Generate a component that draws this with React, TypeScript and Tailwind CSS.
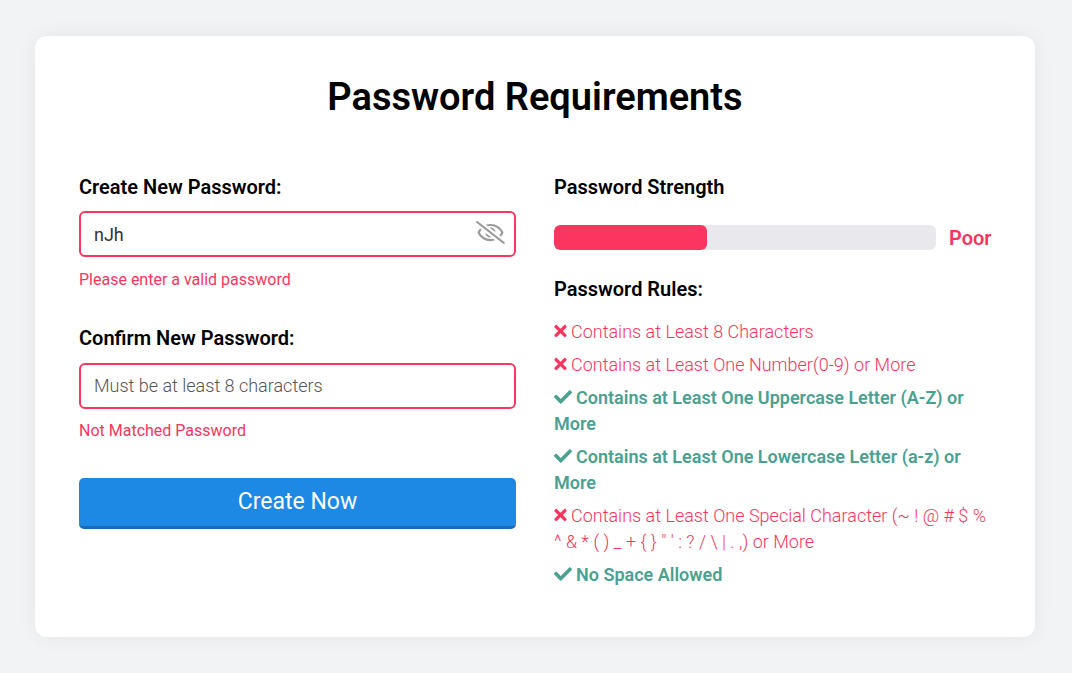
import { useState } from "react";
import { FaCheck, FaRegEyeSlash, FaTimes } from "react-icons/fa";

const rules = [
  { text: "Contains at Least 8 Characters", ok: false },
  { text: "Contains at Least One Number(0-9) or More", ok: false },
  { text: "Contains at Least One Uppercase Letter (A-Z) or More", ok: true },
  { text: "Contains at Least One Lowercase Letter (a-z) or More", ok: true },
  {
    text: "Contains at Least One Special Character (~ ! @ # $ % ^ & * ( ) _ + { } \" ' : ? / \\ | . ,) or More",
    ok: false,
  },
  { text: "No Space Allowed", ok: true },
];

function Rule({ text, ok }: { text: string; ok: boolean }) {
  const Icon = ok ? FaCheck : FaTimes;
  return (
    <li className={ok ? "font-semibold text-[#4aa191]" : "font-light text-[#f93560]"}>
      <Icon
        aria-hidden="true"
        className={ok ? "mr-1 inline h-[18px] w-[18px] align-[-2px]" : "mr-1 inline h-[18px] w-[13px] align-[-2px]"}
      />
      {text}
    </li>
  );
}

export default function App() {
  const [password, setPassword] = useState("nJh");
  const [confirm, setConfirm] = useState("");
  const [visible, setVisible] = useState(true);

  return (
    <div className="min-h-screen bg-[#f1f3f5] py-9 pr-[37px] pl-[35px] font-['Roboto',sans-serif] text-black">
      <main className="mx-auto max-w-[1000px] rounded-xl bg-white px-11 pt-9 pb-[49px] shadow-[0_0_20px_rgba(0,0,0,0.06)]">
        <h1 className="text-center text-[38px] leading-[50px] font-semibold">Password Requirements</h1>
        <div className="mt-[52px] grid grid-cols-1 gap-x-[38px] gap-y-8 md:grid-cols-2">
          <form onSubmit={(e) => e.preventDefault()}>
            <label htmlFor="password" className="block text-[20px] leading-[26px] font-semibold">
              Create New Password:
            </label>
            <div className="mt-[11px] flex h-[46px] items-center rounded-md border-2 border-[#f93560] pr-[9px] pl-[13px]">
              <input
                id="password"
                type={visible ? "text" : "password"}
                value={password}
                onChange={(e) => setPassword(e.target.value)}
                className="min-w-0 flex-1 bg-transparent text-[18px] text-[#333] outline-none"
              />
              <button
                type="button"
                aria-label="Toggle password visibility"
                onClick={() => setVisible(!visible)}
                className="pb-1 text-[#999]"
              >
                <FaRegEyeSlash className="h-[23px] w-[29px]" />
              </button>
            </div>
            <p className="mt-3 text-[16px] leading-[22px] text-[#f93560]">Please enter a valid password</p>
            <label htmlFor="confirm" className="mt-[34px] block text-[20px] leading-[26px] font-semibold">
              Confirm New Password:
            </label>
            <input
              id="confirm"
              type="password"
              value={confirm}
              onChange={(e) => setConfirm(e.target.value)}
              placeholder="Must be at least 8 characters"
              className="mt-3 block h-[46px] w-full rounded-md border-2 border-[#f93560] px-[13px] pb-[2px] text-[18px] font-light outline-none placeholder:text-[#555]"
            />
            <p className="mt-[11px] text-[16px] leading-[22px] text-[#f93560]">Not Matched Password</p>
            <button
              type="submit"
              className="mt-9 h-[51px] w-full rounded-[5px] border-b-3 border-[#1a6ab5] bg-[#1e88e5] text-[23px] text-white"
            >
              Create Now
            </button>
          </form>
          <section>
            <h2 className="text-[20px] leading-[26px] font-semibold">Password Strength</h2>
            <div className="mt-[25px] flex items-end">
              <div className="h-[25px] flex-1 overflow-hidden rounded-md bg-[#e9e8ed]">
                <div className="h-full w-2/5 rounded-md bg-[#f93560]" />
              </div>
              <span className="w-[55px] pl-[13px] text-[20px] leading-6 font-semibold text-[#f93560]">Poor</span>
            </div>
            <h2 className="mt-[26px] text-[20px] leading-[26px] font-semibold">Password Rules:</h2>
            <ul className="mt-[17px] flex flex-col gap-[7px] text-[18px] leading-[26px]">
              {rules.map((rule) => (
                <Rule key={rule.text} text={rule.text} ok={rule.ok} />
              ))}
            </ul>
          </section>
        </div>
      </main>
    </div>
  );
}
